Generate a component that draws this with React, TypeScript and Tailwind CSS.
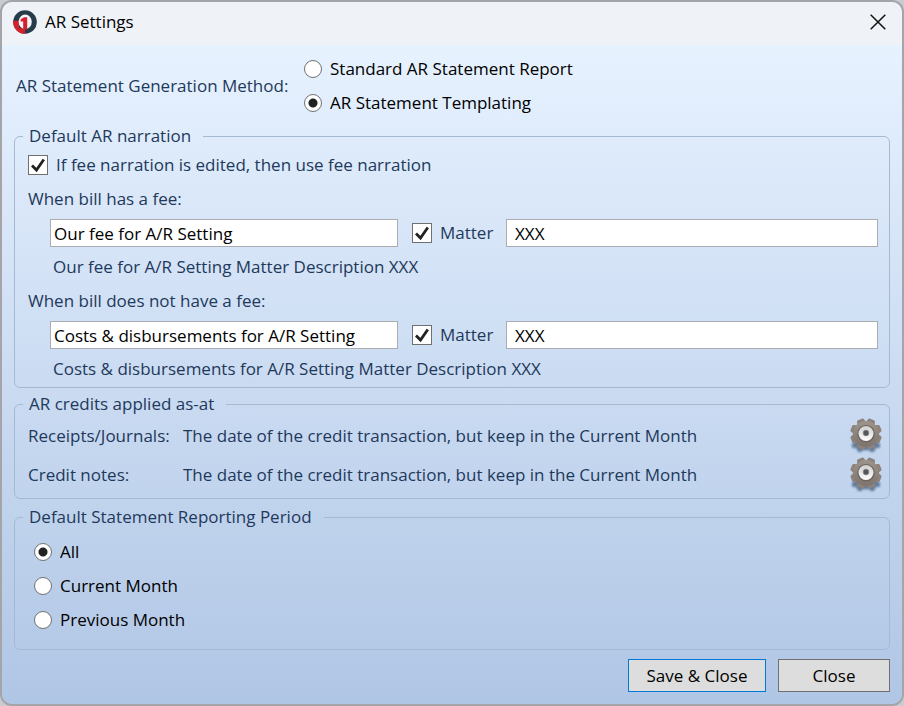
import React, { useState } from 'react';

type StatementMethod = 'STANDARD' | 'TEMPLATE';
type ReportingPeriod = 'ALL' | 'CURRENT' | 'PREVIOUS';

const AppLogo = () => (
  <svg width="24" height="24" viewBox="0 0 24 24" aria-hidden="true">
    <circle cx="12" cy="12" r="11.8" fill="#263c4b" />
    <path d="M.2 10.8H6V18l6 .5v5.300A11.800 11.800 0 0 1 .2 10.800Z" fill="#d5202b" />
    <ellipse cx="12.200" cy="11.800" rx="6.600" ry="7.200" fill="#f2f4f7" />
    <path d="M7.700 9.200 11.200 7.300h3V19.500H10.200v-8H7.700Z" fill="#d5202b" />
  </svg>
);

const TEETH = [22.5, 67.5, 112.5, 157.5, 202.5, 247.5, 292.5, 337.5];

const GearIcon = () => (
  <svg width="34" height="36" viewBox="0 0 34 36" aria-hidden="true">
    <defs>
      <linearGradient id="gearBody" x1="0" y1="0" x2="0" y2="32" gradientUnits="userSpaceOnUse">
        <stop offset="0" stopColor="#a0978f" />
        <stop offset="1" stopColor="#7a7069" />
      </linearGradient>
      <linearGradient id="gearHub" x1="0" y1="0" x2="0" y2="1">
        <stop offset="0" stopColor="#cfcfcf" />
        <stop offset="1" stopColor="#ffffff" />
      </linearGradient>
      <filter id="gearShade" x="-20%" y="-20%" width="140%" height="140%">
        <feGaussianBlur stdDeviation="0.9" />
      </filter>
    </defs>
    <g fill="#4d6687" opacity=".8" filter="url(#gearShade)">
      <circle cx="17" cy="20" r="12.5" />
      <path d="M3 25h7l4 3-1 6H9l-2-4H3ZM31 25h-7l-4 3 1 6h4l2-4h4Z" />
    </g>
    <g fill="#8d837c">
      {TEETH.map((angle) => (
        <path
          key={angle}
          d="M12.200 5 13.500 1Q14 .2 15 .2h4q1 0 1.500.8L21.800 5Z"
          transform={`rotate(${angle} 17 16)`}
        />
      ))}
    </g>
    <circle cx="17" cy="16" r="13" fill="url(#gearBody)" />
    <circle cx="17" cy="15.700" r="8.800" fill="#6d655f" />
    <circle cx="17" cy="15.500" r="7.500" fill="url(#gearHub)" />
    <circle cx="17" cy="15" r="2.900" fill="#555555" stroke="#8f8f8f" strokeWidth=".8" />
  </svg>
);

const CheckBox = ({
  label,
  checked,
  onChange,
}: {
  label: string;
  checked: boolean;
  onChange: (v: boolean) => void;
}) => (
  <label className="flex items-center gap-2 shrink-0">
    <span className="relative size-5">
      <input
        type="checkbox"
        checked={checked}
        onChange={(e) => onChange(e.target.checked)}
        className="block size-5 appearance-none border border-[#707070] bg-white"
      />
      {checked && (
        <svg className="absolute inset-0 pointer-events-none" width="20" height="20" viewBox="0 0 20 20">
          <path d="M4 10.500 8.500 15 15.800 4.500" fill="none" stroke="#212121" strokeWidth="2.800" />
        </svg>
      )}
    </span>
    <span>{label}</span>
  </label>
);

const RadioOption = ({
  name,
  label,
  checked,
  onSelect,
}: {
  name: string;
  label: string;
  checked: boolean;
  onSelect: () => void;
}) => (
  <label className="flex items-center gap-2 h-[34px] text-black">
    <input
      type="radio"
      name={name}
      checked={checked}
      onChange={onSelect}
      className="size-[18px] appearance-none rounded-full border border-[#707070] bg-white checked:bg-[radial-gradient(circle,#212121_4px,#ffffff_5px)]"
    />
    <span>{label}</span>
  </label>
);

const Group = ({ title, className, children }: { title: string; className?: string; children: React.ReactNode }) => (
  <fieldset className={`min-w-0 rounded-md border border-[#a6b9d3] px-2 ${className ?? ''}`}>
    <legend className="h-6 pl-1.5 pr-3">{title}</legend>
    {children}
  </fieldset>
);

const NarrationFields = ({ heading, initialText }: { heading: string; initialText: string }) => {
  const [text, setText] = useState(initialText);
  const [useMatter, setUseMatter] = useState(true);
  const [matter, setMatter] = useState('XXX');

  return (
    <div className="pt-2.5">
      <p>{heading}</p>
      <div className="mt-2 ml-[22px] grid grid-cols-[348fr_108px_372fr] items-center">
        <input
          type="text"
          aria-label={heading}
          value={text}
          onChange={(e) => setText(e.target.value)}
          className="h-7 min-w-0 border border-[#abadb3] bg-white px-[3px] text-black"
        />
        <div className="pl-3.5">
          <CheckBox label="Matter" checked={useMatter} onChange={setUseMatter} />
        </div>
        <input
          type="text"
          aria-label="Matter description"
          value={matter}
          onChange={(e) => setMatter(e.target.value)}
          className="h-7 min-w-0 border border-[#abadb3] bg-white px-2 text-black"
        />
      </div>
      <p className="mt-2 ml-[25px]">
        {text}
        {useMatter && ` Matter Description ${matter}`}
      </p>
    </div>
  );
};

const CreditRow = ({ label, value }: { label: string; value: string }) => (
  <div className="flex h-[39px] items-center">
    <span className="w-[155px] shrink-0">{label}</span>
    <span className="flex-1">{value}</span>
    <button type="button" aria-label={`Configure ${label}`}>
      <GearIcon />
    </button>
  </div>
);

const App: React.FC = () => {
  const [method, setMethod] = useState<StatementMethod>('TEMPLATE');
  const [period, setPeriod] = useState<ReportingPeriod>('ALL');
  const [useFeeNarration, setUseFeeNarration] = useState(true);

  return (
    <div className="min-h-screen bg-[#c9cbd0] flex font-['Open_Sans',sans-serif] text-[17px] leading-6 text-[#1e395b]">
      <div className="flex flex-1 flex-col overflow-hidden rounded-xl border-2 border-[#a3a5a9]">
        <header className="flex h-[43px] items-center justify-between bg-[#eff3f8] pl-[11px] pr-4 pb-[3px] text-black">
          <div className="flex items-center gap-2">
            <AppLogo />
            <h1>AR Settings</h1>
          </div>
          <button type="button" aria-label="Close window">
            <svg width="16" height="16" viewBox="0 0 16 16">
              <path d="M.7.700 15.300 15.300M15.300.700.700 15.300" stroke="#111" strokeWidth="1.500" />
            </svg>
          </button>
        </header>

        <main className="flex flex-1 flex-col bg-linear-to-b from-[#e7f2ff] to-[#b0c6e5] px-3 pt-[7px] pb-3">
          <div className="flex items-center pl-0.5">
            <span className="w-72 shrink-0">AR Statement Generation Method:</span>
            <div>
              <RadioOption
                name="method"
                label="Standard AR Statement Report"
                checked={method === 'STANDARD'}
                onSelect={() => setMethod('STANDARD')}
              />
              <RadioOption
                name="method"
                label="AR Statement Templating"
                checked={method === 'TEMPLATE'}
                onSelect={() => setMethod('TEMPLATE')}
              />
            </div>
          </div>

          <Group title="Default AR narration" className="mt-1 pb-1.5">
            <div className="pt-[5px] pl-[5px] pr-[3px]">
              <CheckBox
                label="If fee narration is edited, then use fee narration"
                checked={useFeeNarration}
                onChange={setUseFeeNarration}
              />
              <NarrationFields heading="When bill has a fee:" initialText="Our fee for A/R Setting" />
              <NarrationFields
                heading="When bill does not have a fee:"
                initialText="Costs & disbursements for A/R Setting"
              />
            </div>
          </Group>

          <Group title="AR credits applied as-at" className="mt-1 pb-1">
            <div className="-mr-0.5 pl-[5px]">
              <CreditRow
                label="Receipts/Journals:"
                value="The date of the credit transaction, but keep in the Current Month"
              />
              <CreditRow
                label="Credit notes:"
                value="The date of the credit transaction, but keep in the Current Month"
              />
            </div>
          </Group>

          <Group title="Default Statement Reporting Period" className="mt-1.5 pb-3">
            <div className="pt-1.5 pl-[11px]">
              <RadioOption name="period" label="All" checked={period === 'ALL'} onSelect={() => setPeriod('ALL')} />
              <RadioOption
                name="period"
                label="Current Month"
                checked={period === 'CURRENT'}
                onSelect={() => setPeriod('CURRENT')}
              />
              <RadioOption
                name="period"
                label="Previous Month"
                checked={period === 'PREVIOUS'}
                onSelect={() => setPeriod('PREVIOUS')}
              />
            </div>
          </Group>

          <footer className="mt-auto flex justify-end gap-3 text-black">
            <button type="button" className="h-[33px] w-[138px] border border-[#0078d7] bg-[#dddddd]">
              Save &amp; Close
            </button>
            <button type="button" className="h-[33px] w-28 border border-[#707070] bg-[#dddddd]">
              Close
            </button>
          </footer>
        </main>
      </div>
    </div>
  );
};

export default App;
